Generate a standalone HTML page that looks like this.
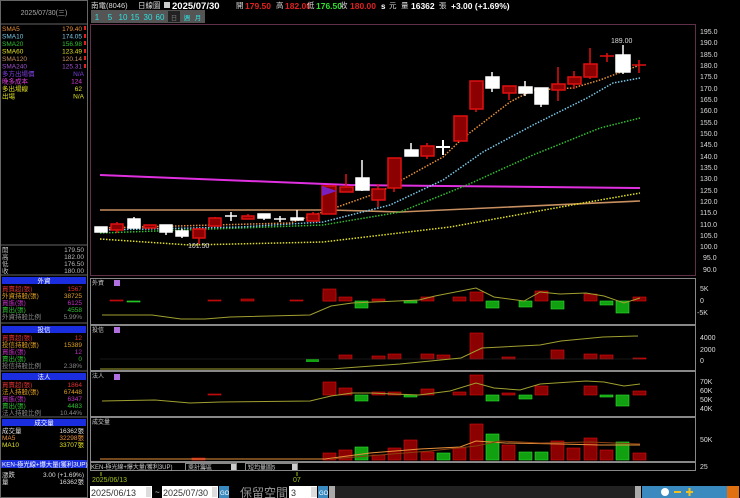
<!DOCTYPE html>
<html><head><meta charset="utf-8"><style>
html,body{margin:0;padding:0;background:#000;width:740px;height:498px;overflow:hidden}
svg{display:block;font-family:"Liberation Sans","Noto Sans CJK TC",sans-serif}
</style></head><body>
<svg width="740" height="498" viewBox="0 0 740 498" xmlns="http://www.w3.org/2000/svg">
<rect width="740" height="498" fill="#000"/>
<!-- left panel -->
<rect x="0.5" y="0.5" width="87" height="497" fill="#000" stroke="#666"/>
<line x1="0" y1="24" x2="88" y2="24" stroke="#666"/>
<text x="44" y="15" fill="#aaa" font-size="7" text-anchor="middle">2025/07/30(三)</text>
<g font-size="6.5">
<text x="2" y="31" fill="#e8903a">SMA5</text><text x="82" y="31" fill="#e8903a" text-anchor="end">179.40</text>
<text x="2" y="38.5" fill="#7ac8e8">SMA10</text><text x="82" y="38.5" fill="#7ac8e8" text-anchor="end">174.05</text>
<text x="2" y="46" fill="#30c030">SMA20</text><text x="82" y="46" fill="#30c030" text-anchor="end">156.98</text>
<text x="2" y="53.5" fill="#e0e020">SMA60</text><text x="82" y="53.5" fill="#e0e020" text-anchor="end">123.49</text>
<text x="2" y="61" fill="#c89060">SMA120</text><text x="82" y="61" fill="#c89060" text-anchor="end">120.14</text>
<text x="2" y="68.5" fill="#a050d0">SMA240</text><text x="82" y="68.5" fill="#a050d0" text-anchor="end">125.31</text>
<text x="2" y="76" fill="#8040e0">多方出場價</text><text x="84" y="76" fill="#8040e0" text-anchor="end">N/A</text>
<text x="2" y="83.5" fill="#e040e0">晚多成本</text><text x="82" y="83.5" fill="#e040e0" text-anchor="end">124</text>
<text x="2" y="91" fill="#e0e020">多出場線</text><text x="82" y="91" fill="#e0e020" text-anchor="end">62</text>
<text x="2" y="98.5" fill="#e0e020">出場</text><text x="84" y="98.5" fill="#e0e020" text-anchor="end">N/A</text>
</g>
<g fill="#e02020"><rect x="84" y="26" width="2" height="4"/><rect x="84" y="34" width="2" height="4"/><rect x="84" y="41" width="2" height="4"/><rect x="84" y="49" width="2" height="4"/><rect x="84" y="56" width="2" height="4"/><rect x="84" y="64" width="2" height="4"/></g>
<line x1="0" y1="245" x2="88" y2="245" stroke="#666"/>
<g font-size="6.5" fill="#bbb">
<text x="2" y="252">開</text><text x="84" y="252" text-anchor="end">179.50</text>
<text x="2" y="259">高</text><text x="84" y="259" text-anchor="end">182.00</text>
<text x="2" y="266">低</text><text x="84" y="266" text-anchor="end">176.50</text>
<text x="2" y="273">收</text><text x="84" y="273" text-anchor="end">180.00</text>
</g>
<line x1="0" y1="275" x2="88" y2="275" stroke="#666"/>
<!-- 外資 -->
<rect x="2" y="277" width="84" height="7" fill="#1a2ee0"/><text x="44" y="283" fill="#fff" font-size="6.5" text-anchor="middle">外資</text>
<g font-size="6.5">
<text x="2" y="291" fill="#e03030">買賣超(張)</text><text x="82" y="291" fill="#e03030" text-anchor="end">1567</text>
<text x="2" y="298" fill="#e0a020">外資持股(張)</text><text x="82" y="298" fill="#e0a020" text-anchor="end">38725</text>
<text x="2" y="305" fill="#c030c0">買進(張)</text><text x="82" y="305" fill="#c030c0" text-anchor="end">6125</text>
<text x="2" y="312" fill="#30c030">賣出(張)</text><text x="82" y="312" fill="#30c030" text-anchor="end">4558</text>
<text x="2" y="319" fill="#888">外資持股比例</text><text x="82" y="319" fill="#888" text-anchor="end">5.99%</text>
</g>
<line x1="0" y1="323" x2="88" y2="323" stroke="#666"/>
<rect x="2" y="326" width="84" height="7" fill="#1a2ee0"/><text x="44" y="332" fill="#fff" font-size="6.5" text-anchor="middle">投信</text>
<g font-size="6.5">
<text x="2" y="340" fill="#e03030">買賣超(張)</text><text x="82" y="340" fill="#e03030" text-anchor="end">12</text>
<text x="2" y="347" fill="#e0a020">投信持股(張)</text><text x="82" y="347" fill="#e0a020" text-anchor="end">15389</text>
<text x="2" y="354" fill="#c030c0">買進(張)</text><text x="82" y="354" fill="#c030c0" text-anchor="end">12</text>
<text x="2" y="361" fill="#30c030">賣出(張)</text><text x="82" y="361" fill="#30c030" text-anchor="end">0</text>
<text x="2" y="368" fill="#888">投信持股比例</text><text x="82" y="368" fill="#888" text-anchor="end">2.38%</text>
</g>
<line x1="0" y1="371" x2="88" y2="371" stroke="#666"/>
<rect x="2" y="373" width="84" height="7" fill="#1a2ee0"/><text x="44" y="379" fill="#fff" font-size="6.5" text-anchor="middle">法人</text>
<g font-size="6.5">
<text x="2" y="387" fill="#e03030">買賣超(張)</text><text x="82" y="387" fill="#e03030" text-anchor="end">1864</text>
<text x="2" y="394" fill="#e0a020">法人持股(張)</text><text x="82" y="394" fill="#e0a020" text-anchor="end">67448</text>
<text x="2" y="401" fill="#c030c0">買進(張)</text><text x="82" y="401" fill="#c030c0" text-anchor="end">6347</text>
<text x="2" y="408" fill="#30c030">賣出(張)</text><text x="82" y="408" fill="#30c030" text-anchor="end">4483</text>
<text x="2" y="415" fill="#888">法人持股比例</text><text x="82" y="415" fill="#888" text-anchor="end">10.44%</text>
</g>
<line x1="0" y1="417" x2="88" y2="417" stroke="#666"/>
<rect x="2" y="419" width="84" height="7" fill="#1a2ee0"/><text x="44" y="425" fill="#fff" font-size="6.5" text-anchor="middle">成交量</text>
<g font-size="6.5">
<text x="2" y="433" fill="#ddd">成交量</text><text x="84" y="433" fill="#ddd" text-anchor="end">16362張</text>
<text x="2" y="440" fill="#e8903a">MA5</text><text x="84" y="440" fill="#e8903a" text-anchor="end">32298張</text>
<text x="2" y="447" fill="#e0e020">MA10</text><text x="84" y="447" fill="#e0e020" text-anchor="end">33707張</text>
</g>
<rect x="1" y="460" width="86" height="8" fill="#1a2ee0"/><text x="2" y="466.5" fill="#fff" font-size="6.3">KEN-極光線+爆大量(獲利3UP)</text>
<g font-size="6.5" fill="#ddd">
<text x="2" y="477">漲跌</text><text x="84" y="477" text-anchor="end">3.00 (+1.69%)</text>
<text x="2" y="484">量</text><text x="84" y="484" text-anchor="end">16362張</text>
</g>

<!-- top header -->
<g font-size="7.5">
<text x="91" y="8" fill="#ddd">南電(8046)</text>
<text x="138" y="8" fill="#ddd">日線圖</text>
<rect x="164" y="2" width="6" height="6" fill="#ccc"/>
<text x="172" y="9" fill="#fff" font-weight="bold" font-size="9.5">2025/07/30</text>
<text x="236" y="8" fill="#ddd">開</text><text x="245" y="9" fill="#e02020" font-weight="bold" font-size="8.5">179.50</text>
<text x="276" y="8" fill="#ddd">高</text><text x="285" y="9" fill="#e02020" font-weight="bold" font-size="8.5">182.00</text>
<text x="307" y="8" fill="#ddd">低</text><text x="316" y="9" fill="#30e030" font-weight="bold" font-size="8.5">176.50</text>
<text x="340" y="8" fill="#ddd">收</text><text x="350" y="9" fill="#e02020" font-weight="bold" font-size="8.5">180.00</text>
<text x="381" y="9" fill="#fff" font-weight="bold" font-size="8">s</text><text x="389" y="8" fill="#ddd">元</text>
<text x="401" y="8" fill="#ddd">量</text><text x="411" y="9" fill="#fff" font-weight="bold" font-size="8.5">16362</text><text x="439" y="8" fill="#ddd">張</text>
<text x="451" y="9" fill="#fff" font-weight="bold" font-size="8.5">+3.00 (+1.69%)</text>
</g>
<rect x="91" y="10" width="114" height="13" fill="#555"/>
<g font-size="8" fill="#30e0e0" text-anchor="middle">
<text x="97" y="20">1</text><text x="110" y="20">5</text><text x="123" y="20">10</text><text x="135" y="20">15</text><text x="148" y="20">30</text><text x="160" y="20">60</text>
</g>
<rect x="168" y="11" width="12" height="11" fill="#222"/>
<text x="174" y="20" font-size="6.5" fill="#777" text-anchor="middle">日</text>
<text x="187" y="20" font-size="6.5" fill="#30e0e0" text-anchor="middle">週</text>
<text x="198" y="20" font-size="6.5" fill="#30e0e0" text-anchor="middle">月</text>

<!-- main chart frame -->
<rect x="90.5" y="24.5" width="605" height="251" fill="none" stroke="#603048"/>
<g font-size="7" fill="#ddd">
<text x="700" y="34">195.0</text><text x="700" y="45">190.0</text><text x="700" y="57">185.0</text><text x="700" y="68">180.0</text><text x="700" y="79">175.0</text><text x="700" y="91">170.0</text><text x="700" y="102">165.0</text><text x="700" y="113">160.0</text><text x="700" y="125">155.0</text><text x="700" y="136">150.0</text><text x="700" y="147">145.0</text><text x="700" y="159">140.0</text><text x="700" y="170">135.0</text><text x="700" y="181">130.0</text><text x="700" y="193">125.0</text><text x="700" y="204">120.0</text><text x="700" y="215">115.0</text><text x="700" y="227">110.0</text><text x="700" y="238">105.0</text><text x="700" y="249">100.0</text><text x="703" y="260">95.0</text><text x="703" y="272">90.0</text>
</g>
<!-- MA lines -->
<polyline points="100,175 350,185 640,188" fill="none" stroke="#e030e0" stroke-width="2"/>
<polyline points="100,210 330,210 400,212 640,201" fill="none" stroke="#c89060" stroke-width="1.6"/>
<polyline points="100,239 190,245 323,242 450,227 500,218 583,203 640,193" fill="none" stroke="#e0e020" stroke-width="1.5" stroke-dasharray="1.5,1.5"/>
<polyline points="100,233 323,225 400,212 467,185 533,155 600,128 640,118" fill="none" stroke="#30c030" stroke-width="1.5" stroke-dasharray="1.5,1.5"/>
<polyline points="100,230 240,227 323,222 390,205 443,180 483,152 533,125 587,98 613,83 640,78" fill="none" stroke="#7ac8e8" stroke-width="1.5" stroke-dasharray="1.5,1.5"/>
<polyline points="100,228 290,223 323,212 380,192 443,157 463,138 510,102 533,90 573,88 600,80 640,65" fill="none" stroke="#e8903a" stroke-width="1.5" stroke-dasharray="1.5,1.5"/>
<!-- candles -->
<g stroke-width="1.5">
<g stroke="#fff" fill="#fff">
<rect x="95" y="227" width="12" height="5"/>
<line x1="134" y1="217" x2="134" y2="228"/><rect x="128" y="219" width="12" height="9"/>
<line x1="166" y1="225" x2="166" y2="235"/><rect x="160" y="225" width="12" height="7"/>
<line x1="182" y1="229" x2="182" y2="238"/><rect x="176" y="231" width="12" height="5"/>
<line x1="231" y1="212" x2="231" y2="221"/><line x1="225" y1="216" x2="237" y2="216"/>
<line x1="264" y1="214" x2="264" y2="220"/><rect x="258" y="214" width="12" height="4"/>
<line x1="280" y1="216" x2="280" y2="222"/><line x1="274" y1="219" x2="286" y2="219"/>
<line x1="297" y1="210" x2="297" y2="220"/><rect x="291" y="218" width="12" height="2"/>
<line x1="362" y1="160" x2="362" y2="191"/><rect x="356" y="178" width="13" height="12"/>
<line x1="411" y1="143" x2="411" y2="156"/><rect x="405" y="150" width="13" height="6"/>
<line x1="443" y1="140" x2="443" y2="155" stroke-width="2"/><line x1="436" y1="147" x2="450" y2="147" stroke-width="2"/>
<line x1="492" y1="72" x2="492" y2="92"/><rect x="486" y="77" width="13" height="11"/>
<line x1="525" y1="81" x2="525" y2="96"/><rect x="519" y="87" width="13" height="6"/>
<line x1="541" y1="88" x2="541" y2="107"/><rect x="535" y="88" width="13" height="16"/>
<line x1="623" y1="45" x2="623" y2="74"/><rect x="616" y="55" width="14" height="17"/>
</g>
<g stroke="#e01010" fill="#8b0000">
<line x1="117" y1="222" x2="117" y2="233"/><rect x="111" y="224" width="12" height="6"/>
<rect x="144" y="225" width="12" height="3"/>
<line x1="199" y1="228" x2="199" y2="244"/><rect x="193" y="229" width="12" height="9"/>
<line x1="215" y1="217" x2="215" y2="226"/><rect x="209" y="218" width="12" height="8"/>
<line x1="248" y1="214" x2="248" y2="219"/><rect x="242" y="216" width="12" height="3"/>
<line x1="313" y1="212" x2="313" y2="221"/><rect x="307" y="214" width="12" height="7"/>
<rect x="322" y="186" width="14" height="28"/>
<line x1="346" y1="174" x2="346" y2="192"/><rect x="340" y="187" width="13" height="5"/>
<line x1="378" y1="184" x2="378" y2="207"/><rect x="372" y="189" width="13" height="11"/>
<line x1="394" y1="158" x2="394" y2="192"/><rect x="388" y="158" width="13" height="30"/>
<line x1="427" y1="143" x2="427" y2="159"/><rect x="421" y="146" width="13" height="10"/>
<rect x="454" y="116" width="13" height="25"/>
<line x1="476" y1="81" x2="476" y2="112"/><rect x="470" y="81" width="13" height="28"/>
<line x1="509" y1="86" x2="509" y2="100"/><rect x="503" y="86" width="13" height="7"/>
<line x1="558" y1="67" x2="558" y2="101"/><rect x="552" y="84" width="13" height="6"/>
<line x1="574" y1="71" x2="574" y2="89"/><rect x="568" y="77" width="13" height="7"/>
<line x1="590" y1="48" x2="590" y2="79"/><rect x="584" y="64" width="13" height="13"/>
<line x1="607" y1="53" x2="607" y2="62"/><line x1="600" y1="56" x2="614" y2="56"/>
<line x1="639" y1="60" x2="639" y2="73"/><line x1="632" y1="65" x2="646" y2="65"/>
</g>
</g>
<polygon points="322,186 337,191 322,196" fill="#7a20c0"/>
<text x="188" y="248" fill="#ddd" font-size="7">101.50</text>
<text x="611" y="43" fill="#ddd" font-size="7">189.00</text>

<!-- sub panels -->
<g fill="none" stroke="#888"><rect x="90.5" y="278.5" width="605" height="46"/><rect x="90.5" y="325.5" width="605" height="45"/><rect x="90.5" y="371.5" width="605" height="45"/><rect x="90.5" y="417.5" width="605" height="44"/><rect x="90.5" y="462.5" width="605" height="8"/></g>
<g font-size="6" fill="#ccc"><text x="92" y="285">外資</text><text x="92" y="332">投信</text><text x="92" y="378">法人</text><text x="92" y="424">成交量</text></g>
<g fill="#b070e0"><rect x="114" y="280" width="6" height="6"/><rect x="114" y="327" width="6" height="6"/><rect x="114" y="374" width="6" height="6"/></g>
<g font-size="7" fill="#ddd"><text x="700" y="291">5K</text><text x="700" y="303">0</text><text x="697" y="315">-5K</text>
<text x="700" y="340">4000</text><text x="700" y="352">2000</text><text x="700" y="363">0</text>
<text x="700" y="384">70K</text><text x="700" y="393">60K</text><text x="700" y="402">50K</text><text x="700" y="411">40K</text>
<text x="700" y="442">50K</text><text x="700" y="469">25</text></g>
<!-- panel1 bars -->
<g fill="#8b0000" stroke="#e01010" stroke-width="0.6">
<rect x="110" y="300" width="13" height="1"/><rect x="208" y="300" width="13" height="1"/><rect x="290" y="300" width="13" height="1"/><rect x="241" y="299" width="13" height="2"/>
<rect x="323" y="293" width="13" height="8"/><rect x="323" y="289" width="13" height="12"/><rect x="339" y="297" width="13" height="4"/><rect x="372" y="299" width="13" height="2"/><rect x="421" y="297" width="13" height="4"/><rect x="453" y="297" width="13" height="4"/><rect x="470" y="292" width="13" height="9"/><rect x="535" y="291" width="13" height="10"/><rect x="584" y="294" width="13" height="7"/><rect x="633" y="297" width="13" height="4"/>
</g>
<g fill="#10a010" stroke="#30e030" stroke-width="0.6">
<rect x="127" y="301" width="13" height="1"/><rect x="355" y="301" width="13" height="7"/><rect x="404" y="301" width="13" height="2"/><rect x="486" y="301" width="13" height="7"/><rect x="519" y="301" width="13" height="6"/><rect x="551" y="301" width="13" height="8"/><rect x="600" y="301" width="13" height="4"/><rect x="616" y="301" width="13" height="12"/>
</g>
<polyline points="102,315 152,315 181,319 205,319 230,317 310,315 331,306 352,303 419,300 435,296 476,288 494,297 524,301 540,292 560,294 586,293 604,296 624,303 640,298" fill="none" stroke="#a0a030" stroke-width="1"/>
<!-- panel2 -->
<g fill="#8b0000" stroke="#e01010" stroke-width="0.6">
<rect x="339" y="355" width="13" height="4"/><rect x="372" y="356" width="13" height="3"/><rect x="388" y="354" width="13" height="5"/><rect x="421" y="354" width="13" height="5"/><rect x="437" y="355" width="13" height="4"/><rect x="470" y="333" width="13" height="26"/><rect x="502" y="357" width="13" height="2"/><rect x="551" y="350" width="13" height="9"/><rect x="584" y="354" width="13" height="5"/><rect x="600" y="355" width="13" height="4"/><rect x="633" y="358" width="13" height="1"/>
</g>
<rect x="306" y="359" width="13" height="3" fill="#10a010"/>
<line x1="100" y1="359" x2="640" y2="359" stroke="#333" stroke-width="0.5"/>
<polyline points="100,369 331,369 400,364 461,358 482,348 540,345 561,341 603,337 638,336" fill="none" stroke="#a0a030" stroke-width="1"/>
<!-- panel3 -->
<g fill="#8b0000" stroke="#e01010" stroke-width="0.6">
<rect x="323" y="382" width="13" height="13"/><rect x="339" y="388" width="13" height="7"/><rect x="372" y="392" width="13" height="3"/><rect x="388" y="392" width="13" height="3"/><rect x="421" y="389" width="13" height="6"/><rect x="453" y="392" width="13" height="3"/><rect x="470" y="375" width="13" height="20"/><rect x="502" y="393" width="13" height="2"/><rect x="535" y="386" width="13" height="9"/><rect x="584" y="386" width="13" height="9"/><rect x="633" y="391" width="13" height="4"/><rect x="208" y="394" width="13" height="1"/>
</g>
<g fill="#10a010" stroke="#30e030" stroke-width="0.6">
<rect x="355" y="395" width="13" height="6"/><rect x="404" y="395" width="13" height="2"/><rect x="486" y="395" width="13" height="6"/><rect x="519" y="395" width="13" height="4"/><rect x="600" y="395" width="13" height="2"/><rect x="616" y="395" width="13" height="11"/>
</g>
<polyline points="102,401 155,400 190,403 220,402 310,401 331,396 352,393 370,393 419,395 450,391 476,383 494,388 520,390 540,384 586,381 604,382 624,386 640,384" fill="none" stroke="#a0a030" stroke-width="1"/>
<!-- volume -->
<g fill="#8b0000" stroke="#e01010" stroke-width="0.6">
<rect x="323" y="453" width="13" height="7"/><rect x="339" y="450" width="13" height="10"/><rect x="372" y="455" width="13" height="5"/><rect x="388" y="448" width="13" height="12"/><rect x="404" y="440" width="13" height="20"/><rect x="421" y="452" width="13" height="8"/><rect x="453" y="448" width="13" height="12"/><rect x="470" y="424" width="13" height="36"/><rect x="502" y="445" width="13" height="15"/><rect x="551" y="441" width="13" height="19"/><rect x="567" y="448" width="13" height="12"/><rect x="584" y="438" width="13" height="22"/><rect x="600" y="450" width="13" height="10"/><rect x="633" y="453" width="13" height="7"/>
<rect x="192" y="458" width="13" height="2"/>
</g>
<g fill="#10a010" stroke="#30e030" stroke-width="0.6">
<rect x="355" y="447" width="13" height="13"/><rect x="437" y="453" width="13" height="7"/><rect x="486" y="434" width="13" height="26"/><rect x="519" y="452" width="13" height="8"/><rect x="535" y="452" width="13" height="8"/><rect x="616" y="442" width="13" height="18"/>
</g>
<polyline points="100,459 325,459 370,453 420,449 460,447 476,441 505,443 560,444 600,445 640,445" fill="none" stroke="#e8903a" stroke-width="1"/>
<polyline points="330,459 380,455 430,451 476,446 500,441 540,443 590,442 640,444" fill="none" stroke="#8b4010" stroke-width="1"/>
<!-- label bar -->
<text x="91" y="469" font-size="6" fill="#ccc">KEN-極光線+爆大量(獲利3UP)</text>
<rect x="185.5" y="463.5" width="51" height="7" fill="#000" stroke="#888"/><text x="188" y="469.5" font-size="6" fill="#ccc">乘計籌區</text><rect x="231" y="464" width="5" height="6" fill="#ccc"/>
<rect x="245.5" y="463.5" width="52" height="7" fill="#000" stroke="#888"/><text x="248" y="469.5" font-size="6" fill="#ccc">短均量圖5</text><rect x="292" y="464" width="5" height="6" fill="#ccc"/>
<line x1="101" y1="472" x2="101" y2="476" stroke="#a0c020"/><line x1="297" y1="472" x2="297" y2="476" stroke="#a0c020"/>
<text x="92" y="482" font-size="7" fill="#a0c020">2025/06/13</text><text x="293" y="482" font-size="7" fill="#a0c020">07</text>
<!-- controls -->
<rect x="90" y="486" width="62" height="12" fill="#fff"/><text x="91" y="496" font-size="9" fill="#333">2025/06/13</text><rect x="146" y="487" width="5" height="10" fill="#ddd"/>
<text x="155" y="495" font-size="8" fill="#ddd">~</text>
<rect x="162" y="486" width="56" height="12" fill="#fff"/><text x="163" y="496" font-size="9" fill="#333">2025/07/30</text><rect x="212" y="487" width="5" height="10" fill="#ddd"/>
<rect x="219" y="486" width="10" height="12" fill="#3a8ac0"/><text x="220" y="495" font-size="6" fill="#fff">GO</text>
<text x="240" y="497" font-size="12" fill="#999">保留空間</text>
<rect x="289" y="486" width="28" height="12" fill="#fff"/><text x="291" y="496" font-size="9" fill="#333">3</text><rect x="311" y="487" width="6" height="10" fill="#ddd"/>
<rect x="318" y="486" width="10" height="12" fill="#3a8ac0"/><text x="319" y="495" font-size="6" fill="#fff">GO</text>
<rect x="329" y="486" width="6" height="12" fill="#aaa"/>
<rect x="335" y="486" width="300" height="12" fill="#222"/>
<rect x="635" y="486" width="6" height="12" fill="#aaa"/>
<g fill="#3a8ac0"><rect x="642" y="486" width="96" height="12"/></g>
<g fill="#fff"><circle cx="665" cy="492" r="4"/></g>
<rect x="674" y="491" width="7" height="2" fill="#f0c020"/><rect x="686" y="491" width="7" height="2" fill="#f0c020"/><rect x="688.5" y="488" width="2" height="8" fill="#f0c020"/>
<rect x="727" y="486" width="12" height="12" fill="#e07010"/>
</svg>
</body></html>
